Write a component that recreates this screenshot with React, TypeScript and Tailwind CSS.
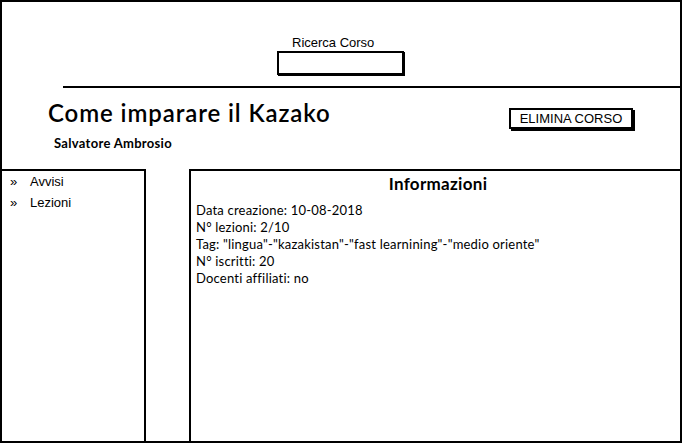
import React from 'react';

const sketchFont = { fontFamily: '"Lato", "Noto Sans", sans-serif' };

const infoLines = [
  'Data creazione: 10-08-2018',
  'N° lezioni: 2/10',
  'Tag: "lingua"-"kazakistan"-"fast learnining"-"medio oriente"',
  'N° iscritti: 20',
  'Docenti affiliati: no',
];

const App: React.FC = () => {
  return (
    <div className="w-[683px] h-[445px] bg-white text-black font-['Liberation_Sans',Arial,sans-serif]">
      <div className="w-[682px] h-[443px] border-2 border-black flex flex-col">
        {/* header */}
        <div className="h-[167px] flex flex-col">
          <div className="pt-[33px] pl-[290px] text-[13px] leading-[15px]">Ricerca Corso</div>
          <div className="ml-[275px] mt-[1px] w-[127px] h-[24px] border-2 border-black shadow-[1px_1px_0_#000]" />
          <div className="ml-[61px] mt-[11px] w-[617px] h-[2px] bg-black" />
          <div className="flex justify-between items-start pl-[46px] pr-[47px] mt-[10px]">
            <div>
              <h1 className="text-[24px] leading-[30px] font-semibold tracking-[0.9px]" style={sketchFont}>Come imparare il Kazako</h1>
              <p className="mt-[7px] ml-[6px] text-[13px] leading-[16px] font-bold tracking-[0.3px]" style={sketchFont}>Salvatore Ambrosio</p>
            </div>
            <button className="mt-[10px] w-[124px] h-[21px] border-2 border-black shadow-[2px_2px_0_#000] bg-white text-[13px] leading-[17px]">
              ELIMINA CORSO
            </button>
          </div>
        </div>

        {/* body */}
        <div className="flex-1 flex gap-[43px]">
          <div className="w-[144px] border-t-2 border-r-2 border-black pt-0 pl-[8px]">
            {['Avvisi', 'Lezioni'].map(item => (
              <div key={item} className="flex items-center h-[21px] text-[13px]">
                <span className="w-[20px] text-[13px]">»</span>
                <span>{item}</span>
              </div>
            ))}
          </div>
          <div className="flex-1 border-t-2 border-l-2 border-black pl-[5px]" style={sketchFont}>
            <h2 className="text-center text-[17px] leading-[22px] font-bold tracking-[0.3px] mt-[2px]">Informazioni</h2>
            <div className="mt-[7px] text-[13px] leading-[17px] tracking-[0.2px]">
              {infoLines.map(line => (
                <p key={line}>{line}</p>
              ))}
            </div>
          </div>
        </div>
      </div>
    </div>
  );
};

export default App;
